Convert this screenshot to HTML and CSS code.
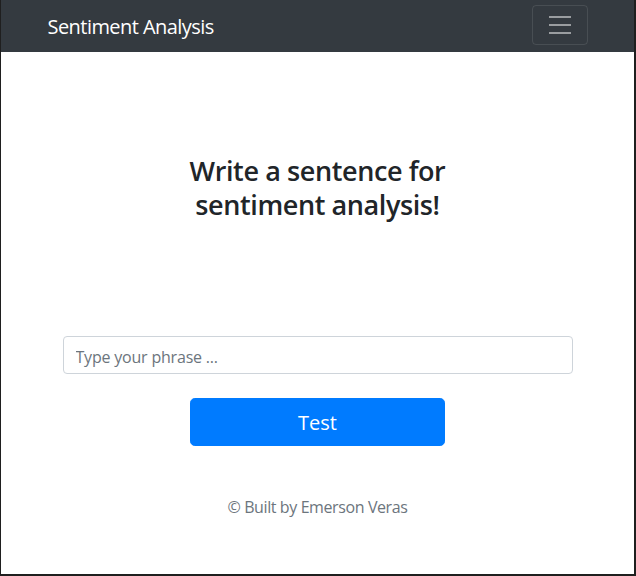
FILE: index.html
```html
<!DOCTYPE html>
<html lang="en">
<head>
<meta charset="utf-8">
<title>Sentiment Analysis</title>
<link rel="stylesheet" href="styles.css">
</head>
<body>
<div class="frame">
  <nav class="navbar">
    <div class="nav-inner">
      <a class="brand" href="#">Sentiment Analysis</a>
      <button class="toggler" type="button" aria-label="Toggle navigation">
        <svg width="30" height="30" viewBox="0 0 30 30" aria-hidden="true">
          <path d="M4 7h22M4 15h22M4 23h22" stroke="rgba(255,255,255,0.5)" stroke-width="2" stroke-linecap="butt"/>
        </svg>
      </button>
    </div>
  </nav>
  <main class="main">
    <h2 class="title">Write a sentence for sentiment analysis!</h2>
    <form class="form" onsubmit="return false">
      <input class="field" type="text" placeholder="Type your phrase ...">
      <button class="btn" type="submit">Test</button>
    </form>
    <p class="footer">© Built by Emerson Veras</p>
  </main>
</div>
</body>
</html>
```
FILE: styles.css
```css
* { box-sizing: border-box; }
html, body { margin: 0; padding: 0; }
body {
  font-family: "Open Sans", "Noto Sans", "Liberation Sans", sans-serif;
  color: #212529;
  background: #fff;
}
.frame {
  height: 576px;
  border-left: 1px solid #1f1f1f;
  border-right: 2px solid #1f1f1f;
  border-bottom: 2px solid #1f1f1f;
  display: flex;
  flex-direction: column;
}
.navbar {
  background: #343a40;
  height: 52px;
  padding: 5px 0 7px;
}
.nav-inner {
  width: 540px;
  margin: 0 auto;
  height: 40px;
  display: flex;
  align-items: center;
  justify-content: space-between;
}
.brand {
  color: #fff;
  font-size: 20px;
  text-decoration: none;
  line-height: 30px;
  letter-spacing: -0.55px;
  padding-top: 3px;
}
.toggler {
  width: 56px;
  height: 40px;
  background: transparent;
  border: 1px solid rgba(255,255,255,0.1);
  border-radius: 4px;
  padding: 0;
  display: flex;
  align-items: center;
  justify-content: center;
}
.toggler svg { display: block; }
.main {
  width: 540px;
  margin: 0 auto;
  padding: 0 15px;
  display: flex;
  flex-direction: column;
  align-items: center;
}
.title {
  margin: 102px 0 0;
  max-width: 300px;
  text-align: center;
  font-size: 27px;
  font-weight: 600;
  line-height: 34px;
  letter-spacing: -0.4px;
}
.form {
  width: 100%;
  margin-top: 114px;
  display: flex;
  flex-direction: column;
  align-items: center;
}
.field {
  width: 100%;
  height: 38px;
  padding: 8px 12px 4px;
  font: inherit;
  font-size: 16px;
  color: #495057;
  border: 1px solid #ced4da;
  border-radius: 4px;
  outline: none;
}
.field::placeholder { color: #6c757d; opacity: 1; letter-spacing: -0.2px; }
.btn {
  width: 50%;
  height: 48px;
  margin-top: 24px;
  background: #007bff;
  color: #fff;
  border: 1px solid #007bff;
  border-radius: 4.8px;
  font: inherit;
  font-size: 20px;
  cursor: pointer;
}
.footer {
  margin: 49px 0 0;
  color: #6c757d;
  font-size: 16px;
  line-height: 24px;
  letter-spacing: -0.4px;
}
```
